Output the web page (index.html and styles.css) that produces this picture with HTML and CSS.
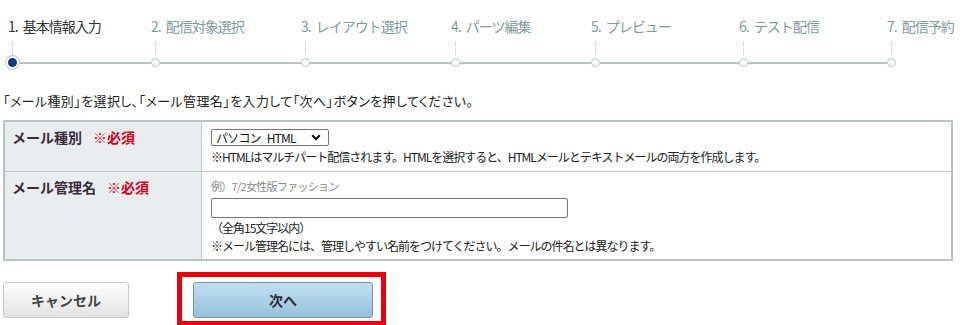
FILE: index.html
```html
<!DOCTYPE html>
<html lang="ja">
<head>
<meta charset="utf-8">
<link rel="stylesheet" href="styles.css">
</head>
<body>
<div class="page">
  <ol class="steps">
    <li class="step is-active">
      <span class="step-label">1. 基本情報入力</span>
      <span class="step-tick"></span>
      <span class="step-track"><span class="step-dot"></span><span class="step-line"></span></span>
    </li>
    <li class="step">
      <span class="step-label">2. 配信対象選択</span>
      <span class="step-tick"></span>
      <span class="step-track"><span class="step-dot"></span><span class="step-line"></span></span>
    </li>
    <li class="step">
      <span class="step-label">3. レイアウト選択</span>
      <span class="step-tick"></span>
      <span class="step-track"><span class="step-dot"></span><span class="step-line"></span></span>
    </li>
    <li class="step">
      <span class="step-label">4. パーツ編集</span>
      <span class="step-tick"></span>
      <span class="step-track"><span class="step-dot"></span><span class="step-line"></span></span>
    </li>
    <li class="step">
      <span class="step-label">5. プレビュー</span>
      <span class="step-tick"></span>
      <span class="step-track"><span class="step-dot"></span><span class="step-line"></span></span>
    </li>
    <li class="step">
      <span class="step-label">6. テスト配信</span>
      <span class="step-tick"></span>
      <span class="step-track"><span class="step-dot"></span><span class="step-line"></span></span>
    </li>
    <li class="step is-last">
      <span class="step-label">7. 配信予約</span>
      <span class="step-tick"></span>
      <span class="step-track"><span class="step-dot"></span></span>
    </li>
  </ol>

  <p class="intro">「メール種別」を選択し、「メール管理名」を入力して「次へ」ボタンを押してください。</p>

  <table class="form-table">
    <tr class="row-type">
      <th><span class="th-name">メール種別</span><span class="req">※必須</span></th>
      <td>
        <div class="cell">
          <span class="select-wrap">
            <select class="type-select"><option>パソコン HTML</option></select>
            <svg class="select-chevron" width="10" height="7" viewBox="0 0 10 7" aria-hidden="true"><path d="M1.2 1.3 L5 5 L8.8 1.3" fill="none" stroke="#111" stroke-width="2.2"/></svg>
          </span>
          <span class="note">※HTMLはマルチパート配信されます。HTMLを選択すると、HTMLメールとテキストメールの両方を作成します。</span>
        </div>
      </td>
    </tr>
    <tr class="row-name">
      <th><span class="th-name">メール管理名</span><span class="req">※必須</span></th>
      <td>
        <div class="cell">
          <span class="hint">例）7/2女性版ファッション</span>
          <input class="name-input" type="text">
          <span class="note">（全角15文字以内）</span>
          <span class="note">※メール管理名には、管理しやすい名前をつけてください。メールの件名とは異なります。</span>
        </div>
      </td>
    </tr>
  </table>

  <div class="actions">
    <button class="btn btn-cancel" type="button">キャンセル</button>
    <div class="highlight">
      <button class="btn btn-next" type="button">次へ</button>
    </div>
  </div>
</div>
</body>
</html>
```

FILE: styles.css
```css
html, body {
  margin: 0;
  padding: 0;
  background: #fff;
}

body {
  font-family: "Noto Sans CJK JP", "Noto Sans", sans-serif;
  color: #333;
}

.page {
  padding: 0 3px;
}

/* ---------- steps ---------- */
.steps {
  list-style: none;
  margin: 0 0 0 5px;
  padding: 0;
  display: grid;
  grid-template-columns: 143px 150px 150px 140px 148px 148px auto;
}

.step {
  display: flex;
  flex-direction: column;
}

.step-label {
  padding-top: 16px;
  font-size: 14px;
  line-height: 20px;
  letter-spacing: -1px;
  word-spacing: 3px;
  color: #7f9b99;
  white-space: nowrap;
}

.is-active .step-label {
  color: #333;
}

.step-tick {
  display: block;
  margin: 6px 0 0 4px;
  height: 13px;
  width: 0;
  border-left: 1px dotted #b5bcbb;
}

.step-track {
  display: flex;
  align-items: center;
  height: 15px;
}

.step-dot {
  flex: none;
  box-sizing: border-box;
  width: 9px;
  height: 9px;
  border-radius: 50%;
  border: 1px solid #bcc4c2;
  background: #fff;
}

.is-active .step-dot {
  box-sizing: content-box;
  width: 9px;
  height: 9px;
  margin-left: -2px;
  background: #0b3c8a;
  border: 2px solid #fff;
  box-shadow: 0 0 0 1px #c3cac8;
}

.step-line {
  flex: 1;
  height: 2px;
  background: #bcc4c2;
}

/* ---------- intro ---------- */
.intro {
  margin: 22px 0 10px;
  font-size: 13px;
  line-height: 18px;
  letter-spacing: 0.4px;
  color: #222;
  font-feature-settings: "palt";
}

/* ---------- table ---------- */
.form-table {
  width: 950px;
  border-collapse: collapse;
  border: 2px solid #bcc4c2;
}

.form-table th,
.form-table td {
  vertical-align: top;
  text-align: left;
  padding: 0;
}

.form-table th {
  width: 189px;
  padding: 6px 0 0 7px;
  background: #e9eded;
  border-right: 1px solid #c6cccb;
  font-size: 14px;
  line-height: 18px;
  font-weight: bold;
  color: #3a2b3a;
  white-space: nowrap;
}

.row-type th,
.row-type td {
  border-bottom: 1px solid #c3c7c6;
}

.req {
  margin-left: 11px;
  color: #d5001c;
}

.form-table td {
  padding: 0 0 0 9px;
}

.cell {
  display: flex;
  flex-direction: column;
  align-items: flex-start;
}

.row-type .cell {
  padding: 7px 0 5px;
}

.row-name .cell {
  padding: 5px 0 4px;
}

.note {
  font-size: 12px;
  line-height: 18px;
  letter-spacing: -1px;
  color: #222;
  white-space: nowrap;
}

.hint {
  font-size: 11px;
  line-height: 18px;
  color: #8a8a8a;
  letter-spacing: -0.7px;
}

.select-wrap {
  position: relative;
  display: block;
  margin-bottom: 2px;
}

.type-select {
  display: block;
  box-sizing: border-box;
  width: 118px;
  height: 17px;
  margin: 0;
  padding: 0 0 0 4px;
  appearance: none;
  -webkit-appearance: none;
  font-family: "Noto Sans CJK JP", sans-serif;
  font-size: 12px;
  line-height: 15px;
  letter-spacing: -0.8px;
  word-spacing: 4px;
  color: #111;
  border: 1px solid #767676;
  border-radius: 2px;
  background: #fff;
}

.select-chevron {
  position: absolute;
  right: 8px;
  top: 5px;
  pointer-events: none;
}

.name-input {
  box-sizing: border-box;
  width: 357px;
  height: 20px;
  margin: 3px 0 1px;
  padding: 0 3px;
  border: 1px solid #767676;
  border-radius: 2px;
  font-size: 12px;
}

/* ---------- actions ---------- */
.actions {
  display: flex;
  align-items: flex-start;
  margin-top: 11px;
}

.btn {
  box-sizing: border-box;
  height: 36px;
  border-radius: 3px;
  font-family: "Noto Sans CJK JP", sans-serif;
  font-size: 14px;
  font-weight: bold;
  cursor: pointer;
}

.btn-cancel {
  margin-top: 10px;
  margin-right: 48px;
  width: 126px;
  color: #444;
  border: 1px solid #c6c6c6;
  background: linear-gradient(#fefefe, #e3e3e3);
}

.highlight {
  border: 5px solid #e8000b;
  padding: 5px 8px 3px 11px;
}

.btn-next {
  display: block;
  width: 180px;
  color: #2b2b3a;
  border: 1px solid #6c96b9;
  background: linear-gradient(#c1def0, #95c3dc);
}
```
